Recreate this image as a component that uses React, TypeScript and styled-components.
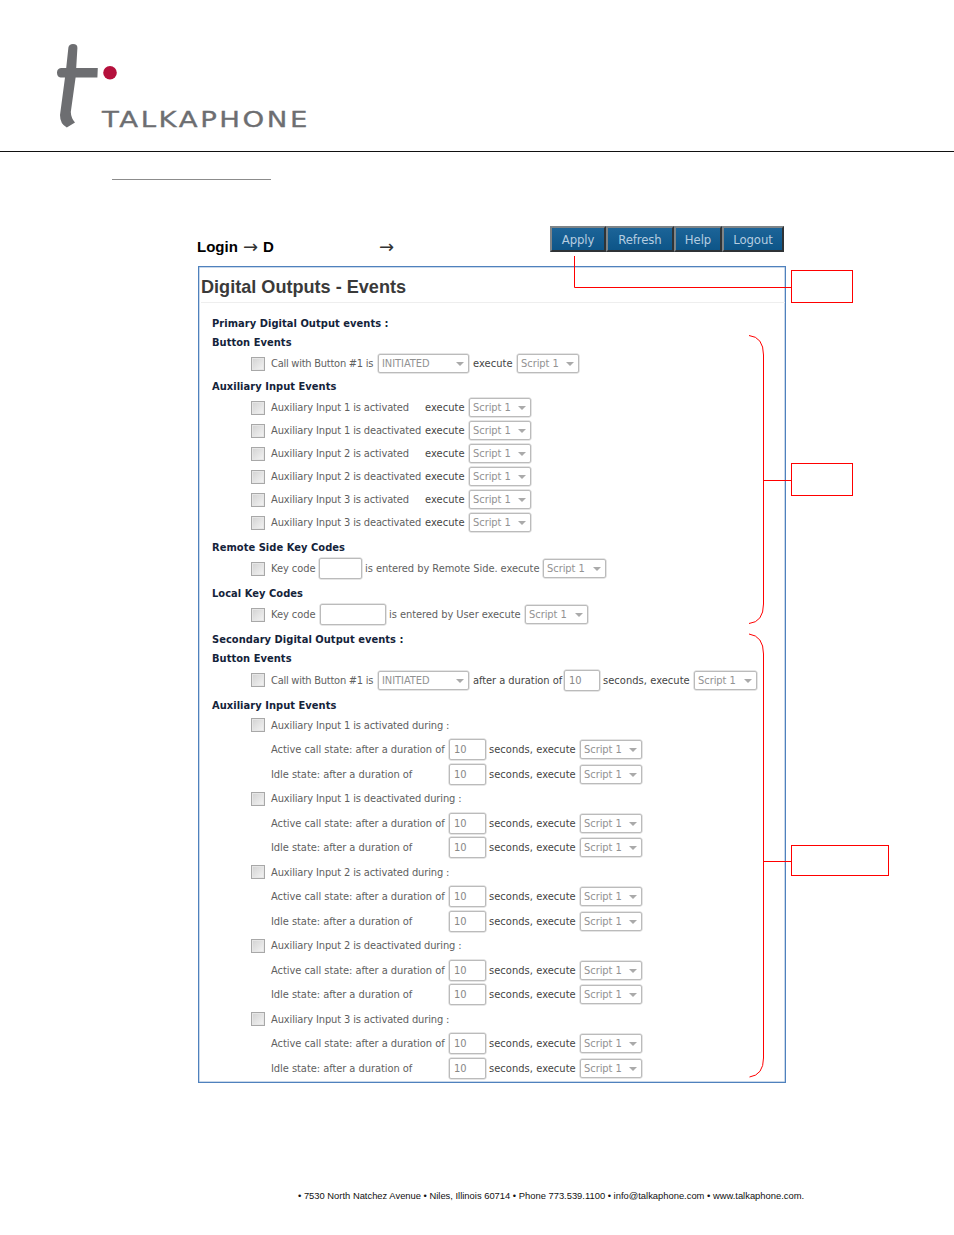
import React from 'react';
import styled, { createGlobalStyle } from 'styled-components';

const Global = createGlobalStyle`
  html, body { margin: 0; padding: 0; background: #fff; }
  body { font-family: "DejaVu Sans Condensed", "DejaVu Sans", sans-serif; }
`;
const Page = styled.div`position: relative; width: 954px; height: 1235px; overflow: hidden;`;
const Header = styled.header`height: 151px; border-bottom: 1px solid #111;`;
const LogoSvg = styled.svg`display: block;`;
const LinkRule = styled.div`width: 159px; height: 1px; background: #8c8c8c; margin: 27px 0 0 112px;`;
const TopBar = styled.div`display: flex; align-items: flex-start; justify-content: space-between; width: 587px; height: 40px; margin: 46px 0 0 197px;`;
const Crumb = styled.div`display: flex; margin-top: 12px; font: bold 15px/17px "Liberation Sans", sans-serif; color: #000;`;
const CrumbPart = styled.span<{ $w: number }>`display: inline-block; width: ${p => p.$w}px;`;
const Arrow = styled.span<{ $w: number }>`display: inline-block; width: ${p => p.$w}px; font: normal 18px/17px "DejaVu Sans", sans-serif; color: #333;`;
const Toolbar = styled.div`display: flex; height: 26px; background: #444;`;
const ToolButton = styled.div<{ $w: number }>`
  box-sizing: border-box; width: ${p => p.$w}px; height: 26px;
  border: 2px solid; border-color: #7f8487 #2f3336 #2f3336 #7f8487;
  background: linear-gradient(#1c6498, #0d5588);
  color: #b5cde0; font-size: 13px; letter-spacing: -0.1px; line-height: 23px; text-align: center;
`;
const Panel = styled.section`box-sizing: border-box; width: 588px; height: 817px; margin-left: 198px; border: 1px solid #4f81bd; box-shadow: inset 0 0 0 0.5px rgba(79,129,189,0.6);`;
const PanelTitle = styled.h1`box-sizing: border-box; margin: 0 0 0 2px; height: 36px; padding-top: 9px; border-bottom: 1px solid #eee; font: bold 18.1px/22px "Liberation Sans", sans-serif; color: #3a3a3a;`;
const Form = styled.div`padding: 11px 0 0 13px;`;
const Heading = styled.div<{ $top?: number }>`margin-top: ${p => p.$top ?? 0}px; height: 19px; font-size: 11px; line-height: 19px; font-weight: bold; letter-spacing: 0.05px; color: #14233a; white-space: nowrap;`;
const Row = styled.div<{ $h?: number; $top?: number }>`display: flex; align-items: center; height: ${p => p.$h ?? 23}px; margin-top: ${p => p.$top ?? 0}px; padding-left: 39px; font-size: 11px; letter-spacing: -0.05px; color: #555; white-space: nowrap;`;
const SubRow = styled(Row)`padding-left: 59px;`;
const DurationList = styled.div`margin-top: -1.3px;`;
const Check = styled.span`box-sizing: border-box; flex: none; width: 14px; height: 14px; margin-right: 6px; border: 1px solid #a8a8a8; background: linear-gradient(135deg, #d2d2d2, #f4f4f4); box-shadow: inset 0 0 0 1px #e6e6e6;`;
const Label = styled.span<{ $w: number; $dark?: boolean; $ml?: number; $track?: number }>`
  display: inline-block; flex: none; width: ${p => p.$w}px; margin-left: ${p => p.$ml ?? 0}px;
  letter-spacing: ${p => p.$track ?? (p.$dark ? 0.05 : -0.05)}px;
  color: ${p => p.$dark ? '#444' : '#5f5f5f'};
`;
const SelectBox = styled.span<{ $w: number }>`
  position: relative; box-sizing: border-box; flex: none; display: inline-block; width: ${p => p.$w}px; height: 19px;
  border: 1px solid #bbb; border-radius: 2px; box-shadow: 0 0 0 0.5px #ccc; padding-left: 3px;
  color: #929292; line-height: 17px; font-size: 11px;
  &::after { content: ''; position: absolute; right: 4px; top: 7px; border: 4px solid transparent; border-top: 4px solid #aaa; border-bottom: 0; }
`;
const TextBox = styled.span<{ $w: number }>`box-sizing: border-box; flex: none; display: inline-block; width: ${p => p.$w}px; height: 21px; border: 1px solid #bbb; border-radius: 2px; box-shadow: 0 0 0 0.5px #ccc; padding-left: 4px; color: #888; line-height: 19px; font-size: 11px;`;
const Footer = styled.footer`position: absolute; left: 298px; top: 1190px; font: 9.4px/12px "Liberation Sans", sans-serif; color: #111; white-space: nowrap;`;
const Overlay = styled.svg`position: absolute; left: 0; top: 0; pointer-events: none;`;

const Script = ({ w = 62 }: { w?: number }) => <SelectBox $w={w}>Script 1</SelectBox>;

const AuxRow = ({ label }: { label: string }) => (
  <Row>
    <Check />
    <Label $w={154} $track={-0.13}>{label}</Label>
    <Label $w={44} $dark>execute</Label>
    <Script />
  </Row>
);

const DurationRows = ({ title }: { title: string }) => (
  <>
    <Row $h={24.5}><Check /><Label $w={300} $track={-0.13}>{title}</Label></Row>
    <SubRow $h={24.5}>
      <Label $w={178}>Active call state: after a duration of</Label>
      <TextBox $w={37}>10</TextBox>
      <Label $w={91} $ml={3} $dark>seconds, execute</Label>
      <Script />
    </SubRow>
    <SubRow $h={24.5}>
      <Label $w={178}>Idle state: after a duration of</Label>
      <TextBox $w={37}>10</TextBox>
      <Label $w={91} $ml={3} $dark>seconds, execute</Label>
      <Script />
    </SubRow>
  </>
);

export default function App() {
  return (
    <Page>
      <Global />
      <Header>
        <LogoSvg width="954" height="151" viewBox="0 0 954 151">
          <path d="M68.4 47.5 Q69 44 73 44 Q77.6 44 77.4 48 L76.2 68 L97.8 68 L97.4 77.5 L75.6 77.5 L70.8 112 Q71 118 75 122.6 L66.8 127.4 Q60 124 60 115 L65 77.5 L60.5 77.5 Q57 77 57 72.8 Q57 68.4 61 68 L66.2 68 Z" fill="#6d6e71" />
          <circle cx="110" cy="72.8" r="6.8" fill="#b5103c" />
          <text x="102" y="127.4" textLength="208" lengthAdjust="spacingAndGlyphs" letterSpacing="2" fontFamily="DejaVu Sans" fontSize="21.5" stroke="#6d6e71" strokeWidth="0.3" fill="#6d6e71">TALKAPHONE</text>
        </LogoSvg>
      </Header>
      <LinkRule />
      <TopBar>
        <Crumb>
          <CrumbPart $w={46}>Login</CrumbPart>
          <Arrow $w={20}>→</Arrow>
          <CrumbPart $w={116}>D</CrumbPart>
          <Arrow $w={16}>→</Arrow>
        </Crumb>
        <Toolbar>
          <ToolButton $w={56}>Apply</ToolButton>
          <ToolButton $w={68}>Refresh</ToolButton>
          <ToolButton $w={48}>Help</ToolButton>
          <ToolButton $w={62}>Logout</ToolButton>
        </Toolbar>
      </TopBar>
      <Panel>
        <PanelTitle>Digital Outputs - Events</PanelTitle>
        <Form>
          <Heading>Primary Digital Output events :</Heading>
          <Heading>Button Events</Heading>
          <Row>
            <Check />
            <Label $w={107} $track={-0.25}>Call with Button #1 is</Label>
            <SelectBox $w={91}>INITIATED</SelectBox>
            <Label $w={44} $ml={4} $dark>execute</Label>
            <Script />
          </Row>
          <Heading $top={2}>Auxiliary Input Events</Heading>
          <AuxRow label="Auxiliary Input 1 is activated" />
          <AuxRow label="Auxiliary Input 1 is deactivated" />
          <AuxRow label="Auxiliary Input 2 is activated" />
          <AuxRow label="Auxiliary Input 2 is deactivated" />
          <AuxRow label="Auxiliary Input 3 is activated" />
          <AuxRow label="Auxiliary Input 3 is deactivated" />
          <Heading $top={4}>Remote Side Key Codes</Heading>
          <Row>
            <Check />
            <Label $w={48}>Key code</Label>
            <TextBox $w={43} />
            <Label $w={178} $ml={3}>is entered by Remote Side. execute</Label>
            <Script w={63} />
          </Row>
          <Heading $top={4}>Local Key Codes</Heading>
          <Row>
            <Check />
            <Label $w={49}>Key code</Label>
            <TextBox $w={66} />
            <Label $w={136} $ml={3}>is entered by User execute</Label>
            <Script w={63} />
          </Row>
          <Heading $top={3.5}>Secondary Digital Output events :</Heading>
          <Heading>Button Events</Heading>
          <Row $top={1}>
            <Check />
            <Label $w={107} $track={-0.25}>Call with Button #1 is</Label>
            <SelectBox $w={91}>INITIATED</SelectBox>
            <Label $w={91} $ml={4} $track={-0.05} $dark>after a duration of</Label>
            <TextBox $w={36}>10</TextBox>
            <Label $w={91} $ml={3} $dark>seconds, execute</Label>
            <Script w={63} />
          </Row>
          <Heading $top={4}>Auxiliary Input Events</Heading>
          <DurationList>
            <DurationRows title="Auxiliary Input 1 is activated during :" />
            <DurationRows title="Auxiliary Input 1 is deactivated during :" />
            <DurationRows title="Auxiliary Input 2 is activated during :" />
            <DurationRows title="Auxiliary Input 2 is deactivated during :" />
            <DurationRows title="Auxiliary Input 3 is activated during :" />
          </DurationList>
        </Form>
      </Panel>
      <Footer>• 7530 North Natchez Avenue • Niles, Illinois 60714 • Phone 773.539.1100 • info@talkaphone.com • www.talkaphone.com.</Footer>
      <Overlay width="954" height="1235" viewBox="0 0 954 1235" fill="none" stroke="#f00">
        <path d="M574.5 256 V287.5 H791" />
        <rect x="791.5" y="270.5" width="61" height="32" />
        <rect x="791.5" y="463.5" width="61" height="32" />
        <rect x="791.5" y="845.5" width="97" height="30" />
        <path d="M749 335.5 Q763.5 337 763.5 355 V604 Q763.5 622 749 623.5" />
        <path d="M763.5 480.5 H791" />
        <path d="M749 634 Q763.5 636 763.5 654 V1058 Q763.5 1075 749.5 1077" />
        <path d="M763.5 861.5 H791" />
      </Overlay>
    </Page>
  );
}
